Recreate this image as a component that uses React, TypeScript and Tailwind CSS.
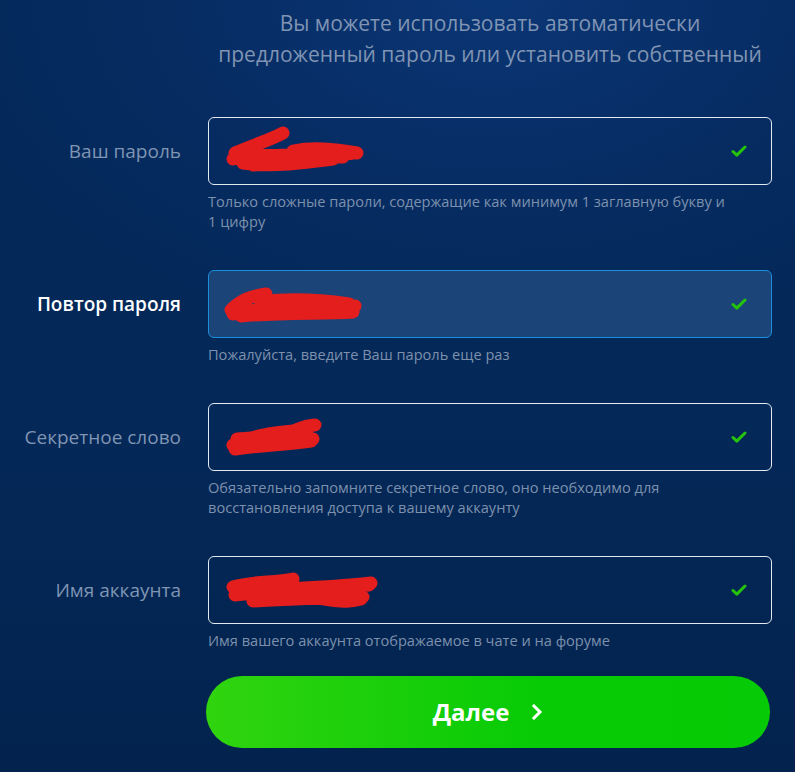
import type { ReactNode } from 'react';

const FONT = "font-['Open_Sans','Liberation_Sans',sans-serif]";

function Check() {
  return (
    <svg className="h-3 w-4 shrink-0" viewBox="0 0 16 12" fill="none" aria-hidden>
      <path d="M2 6.5l3.8 3.6L14 2" stroke="#25c40b" strokeWidth={3} strokeLinecap="round" strokeLinejoin="round" />
    </svg>
  );
}

// redaction scribbles over the typed values
const SCRIBBLES: Record<string, { w: number; h: number; d: string }> = {
  a: { w: 150, h: 56, d: 'M12 30 C30 22 45 18 60 10 M10 36 C40 30 70 34 100 30 M30 42 C60 40 90 36 130 30 M14 32 L120 34 M70 28 C90 24 110 26 134 30 M20 40 C50 44 80 40 110 36' },
  b: { w: 150, h: 40, d: 'M10 26 C20 16 30 12 45 10 M12 30 C50 22 90 20 134 22 M20 32 C60 28 100 30 132 28 M40 18 C70 14 100 16 128 20' },
  c: { w: 110, h: 44, d: 'M10 30 C30 20 50 18 70 16 C80 12 88 10 92 10 M12 34 C40 30 60 30 88 26 M14 24 C40 22 60 22 84 18 M60 28 L90 24' },
  d: { w: 160, h: 42, d: 'M10 18 C30 12 50 14 70 10 M12 26 C50 22 100 20 146 16 M30 32 C70 30 110 28 140 28 M40 22 C80 18 120 18 148 14 M100 30 C120 34 130 32 138 30' },
};

function Scribble({ k }: { k: string }) {
  const s = SCRIBBLES[k];
  return (
    <svg width={s.w} height={s.h} viewBox={`0 0 ${s.w} ${s.h}`} fill="none" aria-hidden className="shrink-0">
      <path d={s.d} stroke="#e41d1d" strokeWidth={13} strokeLinecap="round" strokeLinejoin="round" />
    </svg>
  );
}

function Field({
  label,
  active,
  scribble,
  children,
}: {
  label: string;
  active?: boolean;
  scribble: string;
  children: ReactNode;
}) {
  return (
    <div className="flex">
      <div className="flex h-[68px] w-[181px] shrink-0 items-center justify-end">
        <span className={active ? 'text-[19px] font-semibold text-white' : 'text-[19px] text-[#7f95b3]'}>{label}</span>
      </div>
      <div className="ml-[27px] w-[564px]">
        <div
          className={
            active
              ? 'flex h-[68px] items-center rounded-[6px] border border-[#1b8fdb] bg-[#1b4479] pl-[12px] pr-[24px]'
              : 'flex h-[68px] items-center rounded-[6px] border border-[#e3e9f1] pl-[14px] pr-[24px]'
          }
        >
          <Scribble k={scribble} />
          <div className="ml-auto"><Check /></div>
        </div>
        <p className="mt-[6px] text-[14.6px] leading-[20px] text-[#7d91ad]">{children}</p>
      </div>
    </div>
  );
}

export default function App() {
  return (
    <div
      className={`${FONT} h-[772px] w-[795px] overflow-hidden bg-[radial-gradient(ellipse_70%_45%_at_62%_0%,#0b3675_0%,#062c63_55%,#042858_100%)]`}
    >
      <div className="h-full bg-[linear-gradient(to_bottom,transparent_0%,transparent_55%,#03234e_100%)]">
        <div className="ml-[208px] w-[564px] pt-[8px] text-center text-[21px] leading-[31px] text-[#8094b3]">
          Вы можете использовать автоматически
          <br />
          предложенный пароль или установить собственный
        </div>

        <div className="mt-[47px] flex flex-col gap-[39px]">
          <Field label="Ваш пароль" scribble="a">
            {'Только сложные пароли, содержащие как минимум 1 заглавную букву и 1\u00a0цифру'}
          </Field>
          <Field label="Повтор пароля" scribble="b" active>
            Пожалуйста, введите Ваш пароль еще раз
          </Field>
          <Field label="Секретное слово" scribble="c">
            Обязательно запомните секретное слово, оно необходимо для восстановления доступа к вашему аккаунту
          </Field>
          <Field label="Имя аккаунта" scribble="d">
            Имя вашего аккаунта отображаемое в чате и на форуме
          </Field>
        </div>

        <div className="ml-[206px] mt-[26px] w-[564px]">
          <button className="flex h-[72px] w-full items-center justify-center gap-[22px] rounded-full bg-[linear-gradient(to_right,#30d40f,#06cb05_60%,#05ca05)] text-[24px] font-bold text-white">
            <span>Далее</span>
            <svg className="h-[16px] w-[12px]" viewBox="0 0 12 16" fill="none" aria-hidden>
              <path d="M3 2l6 6-6 6" stroke="white" strokeWidth={3} strokeLinecap="square" />
            </svg>
          </button>
        </div>
      </div>
    </div>
  );
}
